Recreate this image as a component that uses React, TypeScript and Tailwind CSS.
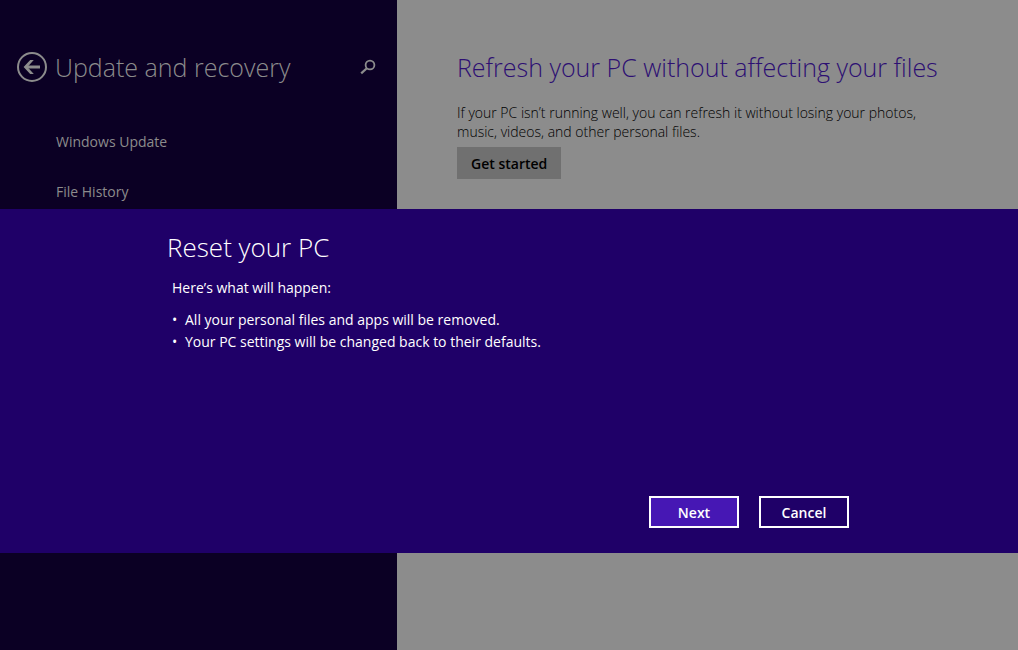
const navItems = ["Windows Update", "File History"];

const resetEffects = [
  "All your personal files and apps will be removed.",
  "Your PC settings will be changed back to their defaults.",
];

function BackIcon() {
  return (
    <svg width="32" height="32" viewBox="0 0 32 32" fill="none" stroke="currentColor">
      <circle cx="16" cy="16" r="14" strokeWidth="2" />
      <path d="M24 16H10" strokeWidth="3" />
      <path d="M14.2 9H17.8L11.4 16L17.8 23H14.2L7.6 16Z" fill="currentColor" stroke="none" />
    </svg>
  );
}

function SearchIcon() {
  return (
    <svg width="16" height="16" viewBox="0 0 16 16" fill="none" stroke="currentColor">
      <circle cx="10" cy="6" r="4.4" strokeWidth="1.8" />
      <path d="M6.8 9.2L1.2 14.4" strokeWidth="2.2" />
    </svg>
  );
}

function Sidebar() {
  return (
    <aside className="w-[39%] shrink-0 bg-[#0b0024] text-[#8c8c8c]">
      <header className="flex items-center pl-4 pr-[21px] pt-[47px]">
        <button aria-label="Back" className="mr-[7px]">
          <BackIcon />
        </button>
        <h1 className="flex-1 whitespace-nowrap text-[25px] leading-10 font-light">
          Update and recovery
        </h1>
        <button aria-label="Search">
          <SearchIcon />
        </button>
      </header>
      <nav className="mt-[30px] pl-14">
        <ul>
          {navItems.map((item) => (
            <li key={item} className="flex h-[50px] items-center text-sm">
              <a href="#">{item}</a>
            </li>
          ))}
        </ul>
      </nav>
    </aside>
  );
}

function RefreshSection() {
  return (
    <main className="flex-1 bg-[#8c8c8c] pl-[60px] pr-20 pt-[47px] text-black">
      <h2 className="whitespace-nowrap text-[25px] leading-10 font-light text-[#2d0f73]">
        Refresh your PC without affecting your files
      </h2>
      <p className="mt-4 text-sm leading-[19px] font-light">
        If your PC isn’t running well, you can refresh it without losing your photos, music,
        videos, and other personal files.
      </p>
      <button className="mt-1.5 h-8 bg-[#707070] px-3.5 pt-px text-sm font-semibold">
        Get started
      </button>
    </main>
  );
}

function ResetDialog() {
  return (
    <section
      role="dialog"
      aria-labelledby="reset-title"
      className="absolute inset-x-0 top-[209px] bg-[#1f0068] pb-[25px] pl-[167px] pr-[169px] pt-[18px] text-white"
    >
      <h2 id="reset-title" className="text-[26px] leading-10 font-light">
        Reset your PC
      </h2>
      <div className="pl-[5px] text-sm leading-[22px]">
        <p className="mt-2.5">Here’s what will happen:</p>
        <ul className="mt-2.5">
          {resetEffects.map((effect) => (
            <li key={effect} className="flex">
              <span className="w-[13px]">•</span>
              {effect}
            </li>
          ))}
        </ul>
      </div>
      <div className="mt-[143px] flex justify-end gap-5 text-sm font-semibold">
        <button className="h-8 w-[90px] border-2 border-white bg-[#4617b4] pt-px">Next</button>
        <button className="h-8 w-[90px] border-2 border-white pt-px">Cancel</button>
      </div>
    </section>
  );
}

export default function App() {
  return (
    <div className="relative flex min-h-screen font-['Open_Sans','Noto_Sans',sans-serif]">
      <Sidebar />
      <RefreshSection />
      <ResetDialog />
    </div>
  );
}
